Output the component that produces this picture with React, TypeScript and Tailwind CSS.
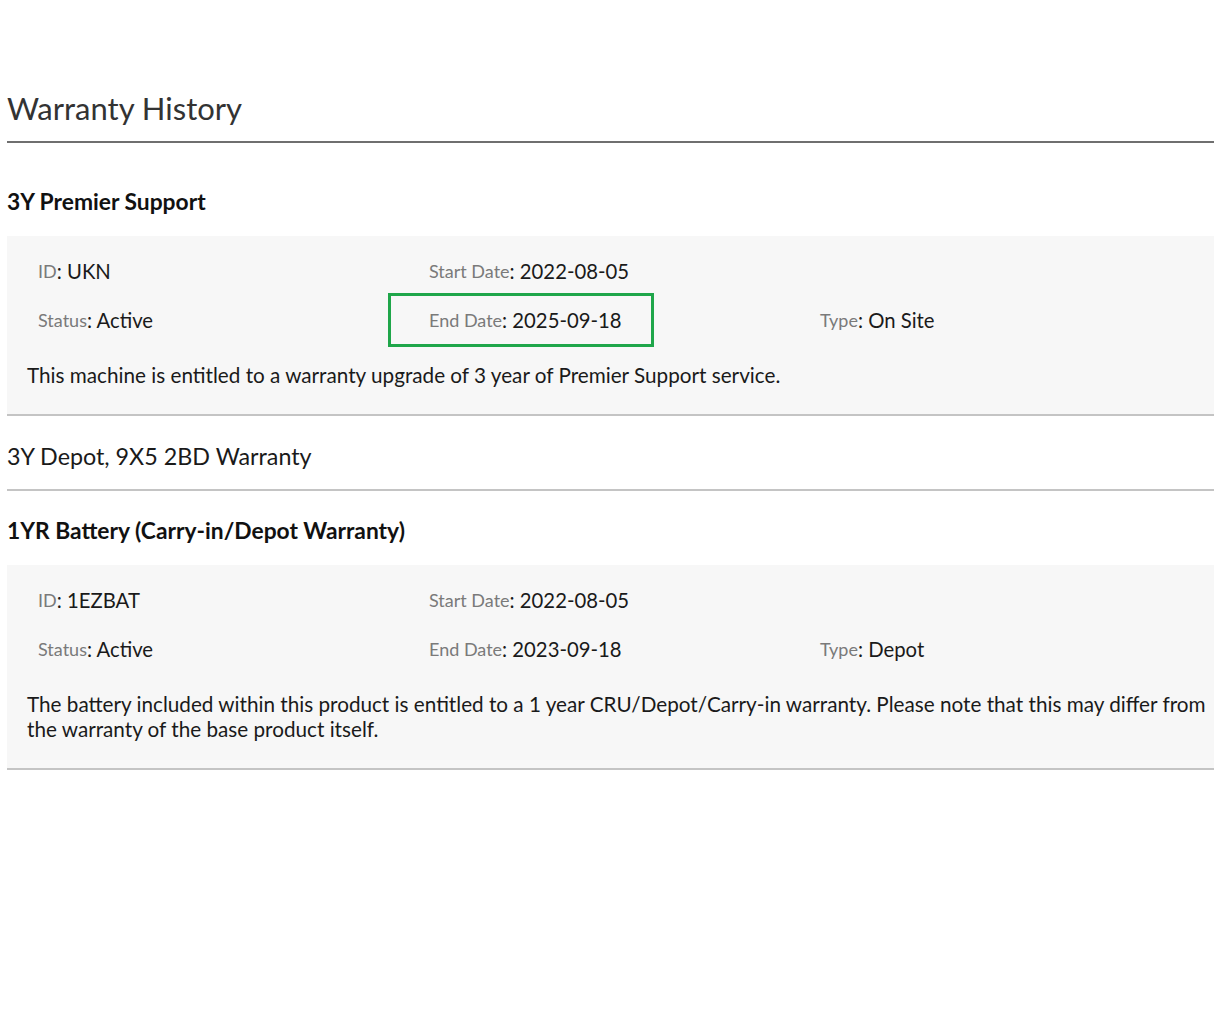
import React from "react";

const font = { fontFamily: "Lato, 'Noto Sans', sans-serif" };

function Field({ label, value, boxed }: { label: string; value: string; boxed?: boolean }) {
  return (
    <div className="relative h-[30px] flex items-center whitespace-nowrap">
      {boxed && (
        <div className="absolute left-[-41px] top-[-12px] w-[266px] h-[54px] border-[3px] border-[#1fa64a]" />
      )}
      <span className="text-[18px] text-[#7a7a7a]">{label}</span>
      <span className="text-[20.3px] text-[#1a1a1a]">: {value}</span>
    </div>
  );
}

function Panel({
  rows,
  desc,
}: {
  rows: { label: string; value: string; boxed?: boolean }[][];
  desc: string;
}) {
  return (
    <div className="bg-[#f7f7f7] border-b-2 border-[#c4c4c4] pt-[20px] pb-[26px] pl-[20px] pr-[6px]">
      <div className="flex flex-col gap-[19px] pl-[11px]">
        {rows.map((r, i) => (
          <div key={i} className="grid grid-cols-[391px_391px_391px]">
            {r.map((f, j) => (
              <div key={j}>{f.label ? <Field {...f} /> : null}</div>
            ))}
          </div>
        ))}
      </div>
      <p className="mt-[28px] text-[20.7px] leading-[25px] text-[#1a1a1a]">{desc}</p>
    </div>
  );
}

export default function App() {
  return (
    <div style={font} className="bg-white min-h-[1020px] pl-[7px] text-[#1a1a1a]">
      <div className="h-[141px] flex items-end pb-[14px]">
        <h1 className="text-[31px] leading-[38px] text-[#333333]">Warranty History</h1>
      </div>
      <div className="h-[2px] bg-[#6f6f6f]" />
      <h2 className="mt-[43px] text-[22.8px] leading-[30px] font-bold text-[#111]">3Y Premier Support</h2>
      <div className="mt-[20px]">
        <Panel
          rows={[
            [
              { label: "ID", value: "UKN" },
              { label: "Start Date", value: "2022-08-05" },
              { label: "", value: "" },
            ],
            [
              { label: "Status", value: "Active" },
              { label: "End Date", value: "2025-09-18", boxed: true },
              { label: "Type", value: "On Site" },
            ],
          ]}
          desc="This machine is entitled to a warranty upgrade of 3 year of Premier Support service."
        />
      </div>
      <div className="h-[75px] pt-[25px] border-b-2 border-[#c4c4c4]">
        <div className="text-[23.3px] leading-[30px] text-[#1a1a1a]">3Y Depot, 9X5 2BD Warranty</div>
      </div>
      <h2 className="mt-[24px] text-[22.8px] leading-[30px] font-bold text-[#111]">
        1YR Battery (Carry-in/Depot Warranty)
      </h2>
      <div className="mt-[20px]">
        <Panel
          rows={[
            [
              { label: "ID", value: "1EZBAT" },
              { label: "Start Date", value: "2022-08-05" },
              { label: "", value: "" },
            ],
            [
              { label: "Status", value: "Active" },
              { label: "End Date", value: "2023-09-18" },
              { label: "Type", value: "Depot" },
            ],
          ]}
          desc="The battery included within this product is entitled to a 1 year CRU/Depot/Carry-in warranty. Please note that this may differ from the warranty of the base product itself."
        />
      </div>
    </div>
  );
}
